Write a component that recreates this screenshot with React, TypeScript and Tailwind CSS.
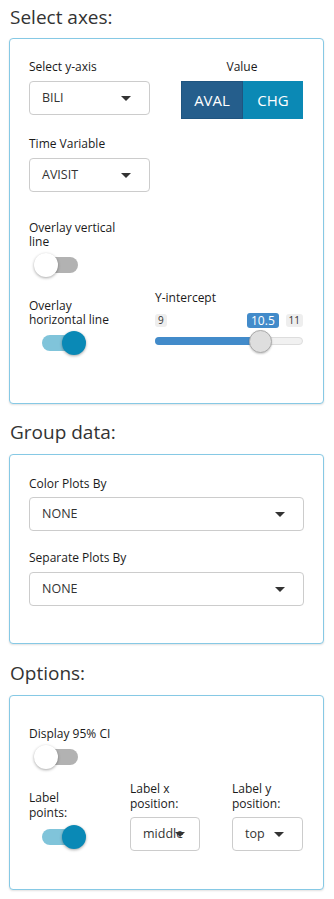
import React from 'react';

function Caret() {
  return <span className="block w-0 h-0 border-l-[5px] border-r-[5px] border-t-[5px] border-l-transparent border-r-transparent border-t-[#333]" />;
}

function Select({ value, className = '' }: { value: string; className?: string }) {
  return (
    <div className={`flex items-center justify-between h-[34px] border border-[#ccc] rounded-[4px] bg-white pl-[12px] pr-[18px] text-[12.5px] text-[#333] ${className}`}>
      <span>{value}</span>
      <Caret />
    </div>
  );
}

function Toggle({ on }: { on: boolean }) {
  return (
    <div className="relative w-[50px] h-[24px] ml-[5px]">
      <div className={`absolute left-[4px] top-[4px] w-[40px] h-[16px] rounded-full ${on ? 'bg-[#80c4da]' : 'bg-[#b2b2b2]'}`} />
      <div
        className={`absolute top-0 w-[24px] h-[24px] rounded-full shadow-[0_1px_3px_rgba(0,0,0,0.35)] ${
          on ? 'left-[24px] bg-[#0a89b6]' : 'left-0 bg-white'
        }`}
      />
    </div>
  );
}

function Card({ children, className = '' }: { children: React.ReactNode; className?: string }) {
  return (
    <div className={`border border-[#86c9e5] rounded-[4px] bg-white shadow-[0_1px_2px_rgba(0,0,0,0.12)] px-[19px] ${className}`}>
      {children}
    </div>
  );
}

function Heading({ children }: { children: React.ReactNode }) {
  return <h3 className="text-[19px] leading-[22px] text-[#333] pl-[1px]">{children}</h3>;
}

export default function App() {
  return (
    <div className="w-[334px] bg-white pl-[9px] pr-[10px] pt-[6px] pb-[11px] font-['Open_Sans',sans-serif] text-[12px] text-[#1a1a1a]">
      {/* SELECT AXES */}
      <Heading>Select axes:</Heading>
      <Card className="mt-[10px] pt-[19px] pb-[19px]">
        <div className="flex">
          <div className="w-[121px]">
            <p className="leading-[18px] mb-[5px]">Select y-axis</p>
            <Select value="BILI" />
          </div>
          <div className="ml-[31px] w-[122px] flex flex-col items-center">
            <p className="leading-[18px] mb-[5px]">Value</p>
            <div className="flex w-full h-[38px] text-[15px] text-white">
              <div className="flex-1 flex items-center justify-center bg-[#255e8c] border border-[#1f5580]">AVAL</div>
              <div className="flex-1 flex items-center justify-center bg-[#0b89b5]">CHG</div>
            </div>
          </div>
        </div>

        <p className="leading-[18px] mt-[16px] mb-[5px]">Time Variable</p>
        <Select value="AVISIT" className="w-[121px]" />

        <p className="leading-[14px] mt-[29px] w-[100px]">Overlay vertical line</p>
        <div className="mt-[4px]">
          <Toggle on={false} />
        </div>

        <div className="flex mt-[12px]">
          <div className="w-[126px] pt-[10px]">
            <p className="leading-[14px] w-[100px]">Overlay horizontal line</p>
            <div className="mt-[4px] ml-[4px]">
              <Toggle on />
            </div>
          </div>
          <div className="w-[148px] pt-[1px]">
            <p className="leading-[16px]">Y-intercept</p>
            <div className="relative h-[40px] mt-[1px]">
              <span className="absolute left-0 top-[7px] px-[3px] rounded-[3px] bg-[#eee] text-[10px] leading-[13px] text-[#333]">9</span>
              <span className="absolute left-[92px] top-[6px] px-[4px] rounded-[3px] bg-[#428bca] text-[12px] leading-[15px] text-white">10.5</span>
              <span className="absolute right-0 top-[7px] px-[3px] rounded-[3px] bg-[#eee] text-[10px] leading-[13px] text-[#333]">11</span>
              <div className="absolute left-0 right-0 top-[30px] h-[8px] rounded-full bg-[#f1f1f1] border border-[#ddd]" />
              <div className="absolute left-0 w-[106px] top-[30px] h-[8px] rounded-l-full bg-[#428bca]" />
              <div className="absolute left-[94px] top-[23px] w-[23px] h-[23px] rounded-full bg-[#dedede] border border-[#aaa] shadow-[0_1px_2px_rgba(0,0,0,0.2)]" />
            </div>
          </div>
        </div>
        <div className="h-[29px]" />
      </Card>

      {/* GROUP DATA */}
      <div className="mt-[17px]">
        <Heading>Group data:</Heading>
      </div>
      <Card className="mt-[11px] pt-[20px] pb-[37px]">
        <p className="leading-[18px] mb-[4px]">Color Plots By</p>
        <Select value="NONE" />
        <p className="leading-[18px] mt-[18px] mb-[5px]">Separate Plots By</p>
        <Select value="NONE" />
      </Card>

      {/* OPTIONS */}
      <div className="mt-[18px]">
        <Heading>Options:</Heading>
      </div>
      <Card className="mt-[11px] pt-[29px] pb-[38px]">
        <p className="leading-[18px]">Display 95% CI</p>
        <div className="mt-[2px]">
          <Toggle on={false} />
        </div>
        <div className="flex mt-[12px]">
          <div className="w-[101px] pt-[9px]">
            <p className="leading-[15px] w-[60px]">Label points:</p>
            <div className="mt-[5px] ml-[4px] w-[60px]">
              <Toggle on />
            </div>
          </div>
          <div className="w-[70px]">
            <p className="leading-[15px]">Label x position:</p>
            <div className="relative mt-[6px] h-[34px] border border-[#ccc] rounded-[4px] flex items-center pl-[12px] text-[12.5px] text-[#333]">
              <span>middle</span>
              <span className="absolute left-[44px] top-[14px] flex"><Caret /></span>
            </div>
          </div>
          <div className="w-[71px] ml-[32px]">
            <p className="leading-[15px]">Label y position:</p>
            <Select value="top" className="mt-[6px] pl-[12px] pr-[16px]" />
          </div>
        </div>
      </Card>
    </div>
  );
}
